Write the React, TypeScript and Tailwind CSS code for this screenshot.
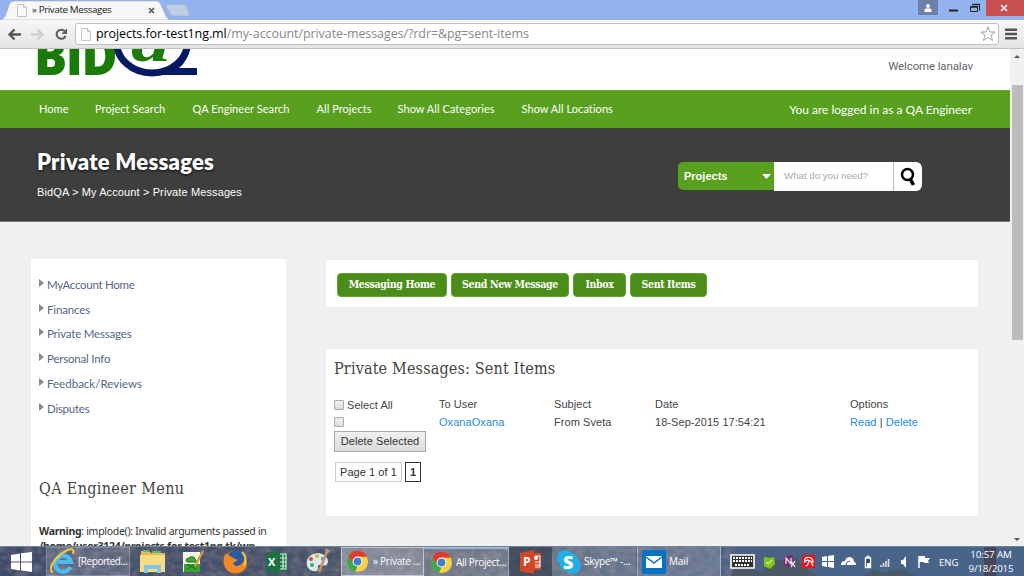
import React from "react";

const nav = ["Home", "Project Search", "QA Engineer Search", "All Projects", "Show All Categories", "Show All Locations"];
const side = [
  ["MyAccount Home", "tracking-[-0.27px]"],
  ["Finances", "tracking-[-0.15px]"],
  ["Private Messages", "tracking-[-0.19px]"],
  ["Personal Info", "tracking-[-0.21px]"],
  ["Feedback/Reviews", "tracking-[0.02px]"],
  ["Disputes", "tracking-[-0.25px]"],
];

function PageIcon() {
  return (
    <svg width="10" height="13" viewBox="0 0 10 13" className="shrink-0">
      <path d="M.5 .5h6l3 3v9h-9z" fill="#fafafa" stroke="#c4c4c4" />
      <path d="M6.5 .5v3h3" fill="none" stroke="#c4c4c4" />
    </svg>
  );
}

function Browser() {
  return (
    <header className="h-[49px] shrink-0 font-['Open_Sans',sans-serif]">
      <div className="relative flex h-[20px] justify-between bg-[#93b3f0]">
        <svg width="200" height="20" className="absolute left-0 top-0">
          <path d="M0 20C5 19 6 15 9 5Q10.500 1 14 1H156Q160 1 161 5L166 16Q168 20 171 20Z" fill="#f7f7f7" stroke="#a4acbb" strokeWidth=".6" />
          <path d="M168 4.500h16q2 0 2.700 2l2.600 8q.3 1.500-1.300 1.500h-14q-2.500 0-3.300-2L165.500 6q-.4-1.500 2.500-1.500Z" fill="#bdcde4" stroke="#9eacc2" strokeWidth=".6" />
        </svg>
        <div className="relative flex h-[20px] w-[160px] items-center pl-[17px] text-[9.800px] text-[#222]">
          <PageIcon />
          <span className="ml-[5px] w-[114px] whitespace-nowrap tracking-[-0.38px]">» Private Messages</span>
          <svg width="7" height="7" className="ml-[2px] shrink-0"><path d="M1 1l5 5M6 1L1 6" stroke="#555" strokeWidth="1.500" /></svg>
        </div>
        <div className="flex h-[16px] items-start">
          <div className="flex h-[15px] w-[20px] items-center justify-center bg-[#6b80ad]">
            <svg width="8" height="8"><circle cx="4" cy="2" r="1.900" fill="#fff" /><path d="M.5 8V6Q.5 4.500 2 4.500H6Q7.500 4.500 7.500 6V8Z" fill="#fff" /></svg>
          </div>
          <svg width="48" height="16">
            <path d="M11 10.500h9" stroke="#222" strokeWidth="2" />
            <path d="M34.500 4.500H41.500V10.500M32.500 6.500H39.500V11.500H32.500Z" fill="none" stroke="#222" />
            <path d="M34 4.500h8M32 7h8" stroke="#222" strokeWidth="1.600" />
          </svg>
          <div className="flex h-[16px] w-[38px] items-center justify-center bg-[#c75050]">
            <svg width="8" height="8" className="mr-[2px]"><path d="M1 1l6 6M7 1L1 7" stroke="#fff" strokeWidth="1.500" /></svg>
          </div>
        </div>
      </div>
      <div className="flex h-[29px] items-center border-b border-[#c4c4c4] bg-linear-to-b from-[#f7f7f7] to-[#e4e4e4]">
        <svg width="75" height="28" className="shrink-0">
          <path d="M21 14.500H10M14.500 9.500L9.500 14.500l5 5" fill="none" stroke="#555" strokeWidth="2.300" />
          <path d="M31 14.500H42M37.500 9.500L42.500 14.500l-5 5" fill="none" stroke="#cfcfcf" strokeWidth="2.300" />
          <path d="M64.500 11A4.600 4.600 0 1 0 65.500 16" fill="none" stroke="#5a5a5a" strokeWidth="2" />
          <path d="M67 8.500v5.500h-5.500z" fill="#5a5a5a" />
        </svg>
        <div className="flex h-[22px] w-[924px] items-center rounded-[3px] border border-[#c0c0c0] bg-white pl-[5px] text-[12.500px] text-[#888]">
          <PageIcon />
          <span className="ml-[5px] whitespace-nowrap tracking-[-0.08px]"><span className="text-black">projects.for-test1ng.ml</span>/my-account/private-messages/?rdr=&amp;pg=sent-items</span>
          <svg width="16" height="16" viewBox="0 0 16 16" className="ml-auto mr-[2px]"><path d="M8 1l1.900 5H15l-4 3.300 1.500 5.200L8 11.500l-4.500 3L5 9.300 1 6h5.100z" fill="#fff" stroke="#999" strokeWidth=".9" /></svg>
        </div>
        <svg width="13" height="12" className="ml-[6px]"><path d="M0 1.800h12M0 6h12M0 10.200h12" stroke="#555" strokeWidth="2.400" /></svg>
      </div>
    </header>
  );
}

function Logo() {
  return (
    <div className="relative h-[41px] w-[170px] overflow-hidden">
      <span className="absolute left-[-3px] top-[-29px] origin-left scale-x-[0.93] font-['Open_Sans',sans-serif] text-[53px] leading-[70px] font-extrabold tracking-[-1.500px] text-[#1b7b07]">BID</span>
      <svg width="165" height="41" className="absolute left-0 top-0">
        <ellipse cx="115" cy="-7" rx="35.500" ry="31" fill="none" stroke="#061a63" strokeWidth="7" />
        <path d="M124 26Q142 18 149 0H153Q150 13 142 19H160V26Z" fill="#061a63" />
      </svg>
      <span className="absolute left-[94px] top-[-35px] origin-left scale-x-[1.350] font-['Liberation_Serif',serif] text-[58px] leading-[56px] font-bold italic text-[#1b7b07]">a</span>
    </div>
  );
}

function Sidebar() {
  return (
    <aside className="h-[290px] w-[255px] shrink-0 bg-white pl-[8px] pt-[13px]">
      <ul className="font-['Lato',sans-serif] text-[11.500px] text-[#566587]">
        {side.map(([t, c]) => (
          <li key={t} className="flex h-[24.800px] items-center">
            <svg width="5" height="8" className="mb-[3px] mr-[3px]"><path d="M0 0L5 4 0 8Z" fill="#8a8a8a" /></svg>
            <span className={c}>{t}</span>
          </li>
        ))}
      </ul>
      <h2 className="mt-[58px] font-['DejaVu_Serif_Condensed','DejaVu_Serif',serif] text-[16px] leading-[20px] tracking-[0.34px] text-[#444]">QA Engineer Menu</h2>
      <p className="mt-[25px] whitespace-nowrap font-['Noto_Sans',sans-serif] text-[10.500px] leading-[15px] tracking-[-0.3px] text-[#333]"><b>Warning</b>: implode(): Invalid arguments passed in<br /><b>/home/user3124/projects.for-test1ng.tk/wp-</b></p>
    </aside>
  );
}

const btn = "flex h-[24px] items-center justify-center rounded-[4px] border border-[#62a32f] bg-[#4b8d18] whitespace-nowrap pb-px";

function Check() {
  return <span className="block h-[10px] w-[10px] shrink-0 rounded-[1px] border border-[#aaa] bg-linear-to-b from-[#eee] to-[#ddd]" />;
}

function Content() {
  return (
    <main className="ml-[40px] w-[652px]">
      <div className="mt-px flex h-[47px] gap-[4px] bg-white pl-[11px] pt-[13px] font-['DejaVu_Serif_Condensed','DejaVu_Serif',serif] text-[10.500px] font-bold tracking-[-0.35px] text-white shadow-[0_0_1px_#ddd]">
        <div className={btn + " w-[110px]"}>Messaging Home</div>
        <div className={btn + " w-[118px]"}>Send New Message</div>
        <div className={btn + " w-[53px]"}>Inbox</div>
        <div className={btn + " w-[77px]"}>Sent Items</div>
      </div>
      <div className="mt-[42px] h-[167px] bg-white pl-[8px] pt-[10px] shadow-[0_0_1px_#ddd]">
        <h2 className="font-['DejaVu_Serif_Condensed','DejaVu_Serif',serif] text-[16px] leading-[20px] tracking-[0.160px] text-[#444]">Private Messages: Sent Items</h2>
        <div className="mt-[17px] grid grid-cols-[105px_115px_101px_195px_100px] font-['Liberation_Sans',sans-serif] text-[11px] leading-[17.500px] tracking-[0.060px] text-[#444]">
          <div className="flex h-[17.500px] items-center gap-[4px]"><Check /><span className="ml-[-1px] pt-[2px]">Select All</span></div>
          <div>To User</div><div>Subject</div><div>Date</div><div>Options</div>
          <div className="flex h-[17.500px] items-center"><Check /></div>
          <div className="text-[#1b8be0]">OxanaOxana</div><div>From Sveta</div><div>18-Sep-2015 17:54:21</div>
          <div><span className="text-[#1b8be0]">Read</span> | <span className="text-[#1b8be0]">Delete</span></div>
        </div>
        <div className="font-['Liberation_Sans',sans-serif] text-[11px] tracking-[0.060px] text-[#333]">
          <div className="flex h-[21px] w-[92px] items-center justify-center border border-[#aaa] bg-linear-to-b from-[#f0f0f0] to-[#dcdcdc] whitespace-nowrap">Delete Selected</div>
          <div className="ml-px mt-[10px] flex gap-[3px]">
            <span className="flex h-[20px] w-[67px] items-center justify-center border border-[#ccc] whitespace-nowrap">Page 1 of 1</span>
            <b className="flex h-[20px] w-[16px] items-center justify-center border border-[#333]">1</b>
          </div>
        </div>
      </div>
    </main>
  );
}

function Site() {
  return (
    <div className="flex h-[497px] shrink-0 overflow-hidden">
      <div className="w-[1010px] shrink-0 bg-[#f0f0f0]">
        <div className="flex h-[41px] justify-between bg-white pl-[37px] pr-[37px]">
          <Logo />
          <span className="pt-[9px] font-['Roboto',sans-serif] text-[11.500px] leading-[16px] tracking-[-0.130px] text-[#666]">Welcome lanalav</span>
        </div>
        <div className="flex h-[38px] justify-between border-t border-[#68ac31] bg-[#58a01e] pl-[39px] pr-[38px] font-['Lato',sans-serif] text-white">
          <nav className="grid grid-cols-[56px_97.500px_124px_81px_124px_100px] text-[11px] leading-[36px] tracking-[0.060px] whitespace-nowrap">
            {nav.map((n) => <span key={n}>{n}</span>)}
          </nav>
          <span className="text-[12px] leading-[38px]">You are logged in as a QA Engineer</span>
        </div>
        <div className="flex h-[94px] justify-between border-b border-[#777] bg-[#3e3e3e] pl-[37px] pr-[88px] text-white">
          <div className="pt-[20px]">
            <h1 className="font-['Lato',sans-serif] text-[22px] leading-[28px] font-extrabold tracking-[0.260px] whitespace-nowrap [text-shadow:0_1px_3px_#111]">Private Messages</h1>
            <div className="mt-[8px] font-['Liberation_Sans',sans-serif] text-[11px] leading-[16px] tracking-[0.120px] whitespace-nowrap">BidQA &gt; My Account &gt; Private Messages</div>
          </div>
          <div className="mt-[34px] flex h-[29px] font-['Liberation_Sans',sans-serif]">
            <div className="flex h-[28px] w-[96px] items-center justify-between rounded-l-[5px] bg-[#58a01e] pl-[6px] pr-[3px] text-[11px] font-bold">Projects<svg width="9" height="5"><path d="M0 0h9L4.500 5z" fill="#fff" /></svg></div>
            <div className="flex w-[120px] items-center border-r border-[#bbb] bg-white pl-[10px] text-[9.800px] tracking-[-0.060px] text-[#aaa]">What do you need?</div>
            <div className="flex w-[28px] items-center justify-center rounded-r-[6px] bg-white"><svg width="16" height="20"><circle cx="7.500" cy="7.500" r="5.500" fill="none" stroke="#000" strokeWidth="2.500" /><path d="M10.500 12.500l3 5.500" stroke="#000" strokeWidth="3.500" /></svg></div>
          </div>
        </div>
        <div className="flex items-start pl-[31px] pt-[37px]"><Sidebar /><Content /></div>
      </div>
      <div className="flex w-[14px] flex-col items-center bg-[#f0f0f0]">
        <svg width="6" height="3" className="mt-[6px]"><path d="M0 3L3 0l3 3z" fill="#555" /></svg>
        <div className="mt-[27px] h-[255px] w-[11px] bg-[#bcbcbc]" />
        <svg width="6" height="3" className="mb-[5px] mt-auto"><path d="M0 0l3 3 3-3z" fill="#555" /></svg>
      </div>
    </div>
  );
}

function Chrome() {
  return (
    <svg width="23" height="23" viewBox="0 0 24 24" className="shrink-0">
      <circle cx="12" cy="12" r="11" fill="#f7d23e" />
      <path d="M2.500 6.500A11 11 0 0 1 22 7H12L7 15Z" fill="#dd3c2f" />
      <path d="M2.500 6.500L8 15l4 2-2.500 5.800A11 11 0 0 1 2.500 6.500Z" fill="#3ea84c" />
      <circle cx="12" cy="12" r="5.200" fill="#fff" /><circle cx="12" cy="12" r="4.100" fill="#3f7fc9" />
    </svg>
  );
}

function Taskbar() {
  return (
    <footer className="relative flex h-[30px] shrink-0 items-stretch overflow-hidden border-t border-[#73839c] bg-linear-to-r from-[#3e4b68] from-0% via-[#4c5769] via-45% to-[#496489] to-80% font-['Open_Sans',sans-serif] text-[10px] text-white">
      <svg width="1024" height="30" className="absolute left-0 top-0">
        <defs>
          <filter id="foliage" x="0" y="0" width="100%" height="100%">
            <feTurbulence type="fractalNoise" baseFrequency=".12 .16" numOctaves="3" seed="4" />
            <feColorMatrix values="0 0 0 0 .32  0 0 0 0 .25  0 0 0 0 .33  1.500 0 0 0 -.5" />
          </filter>
        </defs>
        <rect width="735" height="30" filter="url(#foliage)" opacity=".6" />
        <path d="M730 30l8-14 7 8 5-6 10 8 18-14 10 5 8-7 8 10 14 10ZM862 30l12-8 8 4 18-5 18 9Z" fill="#4c5355" opacity=".65" />
        <path d="M984 0h12v30h-12z" fill="#4a3037" opacity=".6" />
      </svg>
      <div className="relative flex w-[46px] items-center pl-[11px]"><svg width="21" height="20"><path d="M0 3l9-1.500V9.500H0zM10 1.300L21 0v9.500H10zM0 10.500h9v8L0 17zM10 10.500h11V20l-11-1.500z" fill="#fff" /></svg></div>
      <div className="relative flex w-[84px] items-center border border-white/20 bg-white/15 pl-[3px]">
        <svg width="26" height="27" viewBox="0 0 26 27" className="shrink-0">
          <path d="M20.500 19A8 8 0 1 1 21 14H8" fill="none" stroke="#48bdf0" strokeWidth="4.200" />
          <path d="M3 24C-3 24 3 11 14 4 20 0 25 0 23 6" fill="none" stroke="#efc345" strokeWidth="2.200" />
        </svg>
        <span className="ml-[2px] tracking-[-0.450px]">[Reported...</span>
      </div>
      <div className="relative flex w-[211px] items-center">
        <svg width="211" height="29">
          <path d="M11 4h8l2 2h14v19H11z" fill="#e7ba54" /><path d="M10 8h25v17H10z" fill="#f7dc83" /><path d="M13 4h6M22 5h9" stroke="#58bb6f" strokeWidth="2" />
          <path d="M14 26v-8h17v8h-4v-4h-9v4z" fill="#82c7e7" />
          <path d="M53 5h17v20H53z" fill="#f5f6e9" /><path d="M54 17h16v8H54z" fill="#35a52d" /><path d="M56 14q0-3 3-3 1-2 3-1 2-1 3 2l2 3h-9z" fill="#3fae35" stroke="#1d6518" /><path d="M57 17l9 5M66 17l-9 5" stroke="#1d6518" /><path d="M65 19l8-15" stroke="#d79c3d" strokeWidth="2.500" />
          <circle cx="105" cy="15" r="11.500" fill="#e66a20" /><circle cx="106" cy="11" r="8" fill="#295aa0" /><path d="M95 7q5 1 8 4l5 2-5 3q2 5 8 2 4-2 4-8 5 11-4 15-10 3-15-4-4-6-1-14Z" fill="#f18a26" /><path d="M112 5q6 6 2 14" fill="none" stroke="#fac63a" strokeWidth="2" />
          <path d="M136 6l13-3v24l-13-3zM149 6h9v18h-9" fill="#1e7145" /><path d="M150 7h6v15h-6M150 11h6M150 15h6M150 19h6M153 7v15" fill="none" stroke="#d9ebdf" strokeWidth="1.200" />
          <text x="138" y="19" fontSize="11" fontWeight="700" fill="#fff">X</text>
          <path d="M177 13q3-7 12-7 9 2 9 9-1 5-6 3-5-1-4 3 0 4-5 3-8-2-6-11Z" fill="#d5e8ee" />
          <circle cx="182" cy="18" r="2" fill="#41ae53" /><circle cx="181" cy="12" r="2" fill="#e04b38" /><circle cx="187" cy="9" r="2" fill="#e6ae30" /><circle cx="193" cy="12" r="2" fill="#438dd0" />
          <path d="M189 25l7-18" stroke="#c99251" strokeWidth="2.500" /><path d="M195 9l1-8 4 3z" fill="#c1a171" />
        </svg>
      </div>
      <div className="relative flex w-[83px] items-center border border-white/50 bg-white/30 pl-[4px]"><Chrome /><span className="ml-[4px] whitespace-nowrap tracking-[-0.250px]">» Private ...</span></div>
      <div className="relative flex w-[85px] items-center border-r border-t-2 border-white/30 border-t-[#9bb5d5] bg-white/20 pl-[6px]"><Chrome /><span className="ml-[3px] whitespace-nowrap tracking-[-0.300px]">All Project...</span></div>
      <div className="relative flex w-[43px] items-center justify-center bg-[#384451]/60"><svg width="24" height="24"><path d="M1 3l14-3v24L1 21zM15 3h7v17h-7z" fill="#d24726" /><path d="M16 6h5v11h-5M16 12h5M16 15h5" fill="none" stroke="#fff" /><circle cx="17" cy="8" r="2" fill="#fff" /><text x="4" y="16" fontSize="12" fontWeight="700" fill="#fff">P</text></svg></div>
      <div className="relative flex w-[84px] items-center bg-white/15 pl-[5px]"><svg width="24" height="24" className="shrink-0"><circle cx="8" cy="8" r="8" fill="#20aee5" /><circle cx="16" cy="16" r="8" fill="#20aee5" /><circle cx="12" cy="12" r="10" fill="#20aee5" /><text x="6" y="18.500" fontSize="18" fontWeight="800" fill="#fff">S</text></svg><span className="ml-[3px] whitespace-nowrap tracking-[-0.240px]">Skype™ -...</span></div>
      <div className="relative ml-px flex w-[84px] items-center border-l border-r border-white/40 bg-white/15 pl-[4px]"><svg width="24" height="24"><path d="M0 0h24v24H0z" fill="#0873c4" /><path d="M4 6h16v12H4z" fill="#fff" /><path d="M4 7l8 6 8-6" fill="none" stroke="#0873c4" strokeWidth="1.500" /></svg><span className="ml-[3px] tracking-[-0.150px]">Mail</span></div>
      <div className="relative flex flex-1 items-center">
        <svg width="218" height="29" className="shrink-0">
          <path d="M10 8h23v13H10z" fill="#333" stroke="#fff" strokeWidth="1.600" /><path d="M12 11h19M12 14h19M14 18h14" stroke="#fff" strokeWidth="2" strokeDasharray="2 1" />
          <path d="M43 10l5 1 5-1 1 7-5 5-6-3z" fill="#80c51c" /><path d="M45 15l2 2 4-4" stroke="#fff" fill="none" />
          <path d="M63 9l9-1v12l-9-1z" fill="#7a2c7c" /><path d="M65 17v-6l5 6v-6M70 14l4 6M74 14l-4 6" stroke="#f0e5f0" fill="none" strokeWidth="1.300" />
          <path d="M81 8h13v13H81z" fill="#e4161b" /><path d="M83.500 15Q83 10 88 10.500 92 11 92 15L89.500 14 86.500 13ZM88 14l-1.500 4q-.8 1.200-2 .5M90 15l2 4" stroke="#fff" fill="none" strokeWidth="1.200" />
          <path d="M101 10l5-1v5h-5zM107 9l6-1v6h-6zM101 15h5v5l-5-1zM107 15h6v6l-6-1z" fill="#fff" />
          <path d="M120 18q0-4 4-4 1-4 5-4 4 1 4 5 2 0 2 3z" fill="#fff" /><path d="M125 18q0-4 4-4" fill="none" stroke="#496489" />
          <path d="M144.500 11h5v9.500h-5zM145.500 9.500h3" fill="#2d405a" stroke="#fff" strokeWidth="1.400" /><path d="M146 16h3v4h-3z" fill="#fff" />
          <path d="M160 20v-2M162.500 20v-4M165 20v-6M167.500 20v-8" stroke="#ddd" strokeWidth="1.600" />
          <path d="M180 13h2l3-4v12l-3-4h-2z" fill="#fff" /><path d="M198 9v12" stroke="#fff" strokeWidth="1.500" /><path d="M198 9h6v2h5l-2 3 1 2h-5v-1h-5z" fill="#fff" />
        </svg>
        <span className="absolute left-[218px] top-[9px] text-[9.500px] leading-[14px]">ENG</span>
        <div className="absolute left-[247px] top-[1px] w-[46px] text-center text-[9.800px] leading-[14px] whitespace-nowrap tracking-[-0.150px]">10:57 AM<br />9/18/2015</div>
      </div>
    </footer>
  );
}

export default function App() {
  return <div className="flex h-[576px] w-[1024px] flex-col overflow-hidden bg-white"><Browser /><Site /><Taskbar /></div>;
}
